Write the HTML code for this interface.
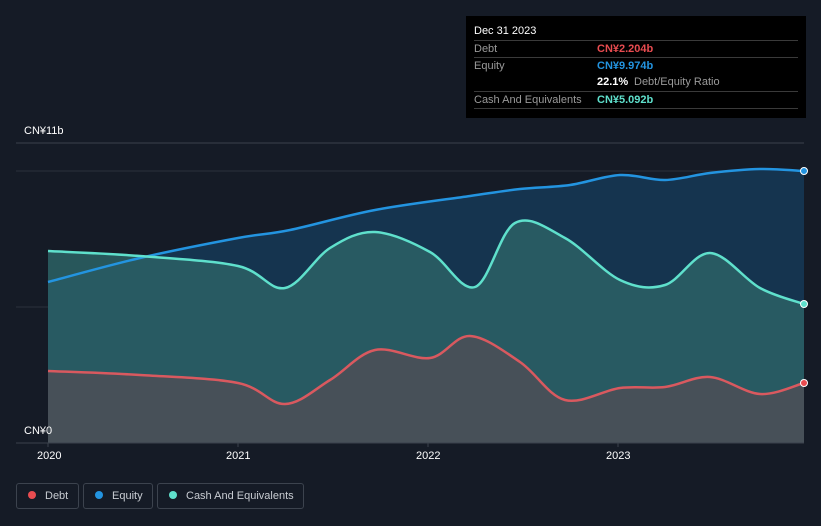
<!DOCTYPE html>
<html><head><meta charset="utf-8"><style>
body{margin:0;background:#151b26;width:821px;height:526px;overflow:hidden;font-family:"Liberation Sans",sans-serif;position:relative}
.tt{position:absolute;left:466px;top:16px;width:340px;height:102px;background:#000;color:#fff;font-size:11px}
.row{position:absolute;left:8px;width:324px;border-top:1px solid #3a3a3a;height:16px}
.row span{position:absolute;top:2px;white-space:nowrap}
.l{left:0;color:#9a9a9a}.v{left:123px;font-weight:bold}
.lab{position:absolute;color:#fff;font-size:11px}
.leg{position:absolute;top:483px;height:26px;border:1px solid #3c434e;border-radius:3px;color:#c8ccd2;font-size:11px;line-height:24px;box-sizing:border-box;white-space:nowrap}
.leg i{display:inline-block;width:8px;height:8px;border-radius:50%;margin:0 9px 0 11px;vertical-align:0}
</style></head><body>
<svg width="821" height="526" style="position:absolute;left:0;top:0">
<line x1="16" y1="143" x2="804" y2="143" stroke="#3a414c"/>
<line x1="16" y1="171" x2="804" y2="171" stroke="#2a313c"/>
<line x1="16" y1="307" x2="804" y2="307" stroke="#2a313c"/>
<path id="eA" fill="#15344f"/>
<path id="cA" fill="#2c6165" fill-opacity="0.85"/>
<path id="dA" fill="#4a4f58" fill-opacity="0.9"/>
<path id="eL" fill="none" stroke="#2394e0" stroke-width="2.5"/>
<path id="cL" fill="none" stroke="#5fe0cc" stroke-width="2.5"/>
<path id="dL" fill="none" stroke="#d9595f" stroke-width="2.5"/>
<line x1="16" y1="443" x2="804" y2="443" stroke="#3a414c"/>
<line x1="48" y1="443" x2="48" y2="447" stroke="#3a414c"/><line x1="238" y1="443" x2="238" y2="447" stroke="#3a414c"/><line x1="428" y1="443" x2="428" y2="447" stroke="#3a414c"/><line x1="618" y1="443" x2="618" y2="447" stroke="#3a414c"/>
<circle cx="804" cy="171" r="3.5" fill="#2394e0" stroke="#fff" stroke-width="1"/>
<circle cx="804" cy="304" r="3.5" fill="#5fe0cc" stroke="#fff" stroke-width="1"/>
<circle cx="804" cy="383" r="3.5" fill="#e84c50" stroke="#fff" stroke-width="1"/>
</svg>
<script>
function sm(p){var d="M"+p[0][0]+","+p[0][1];for(var i=0;i<p.length-1;i++){var a=p[i-1]||p[i],b=p[i],c=p[i+1],e=p[i+2]||c;var t=6;d+=" C"+(b[0]+(c[0]-a[0])/t)+","+(b[1]+(c[1]-a[1])/t)+" "+(c[0]-(e[0]-b[0])/t)+","+(c[1]-(e[1]-b[1])/t)+" "+c[0]+","+c[1];}return d;}
var E=[[48,282],[140,258],[238,238],[290,230],[375,210],[470,196],[520,189],[570,185],[620,175],[665,180],[710,173],[760,169],[804,171]];
var C=[[48,251],[140,256],[238,266],[285,288],[330,248],[375,232],[430,252],[475,287],[515,223],[565,238],[620,280],[665,285],[710,253],[760,288],[804,304]];
var D=[[48,371],[140,375],[238,383],[285,404],[330,380],[375,350],[430,358],[470,336],[520,362],[565,400],[620,388],[665,387],[710,377],[760,394],[804,383]];
[[E,"e"],[C,"c"],[D,"d"]].forEach(function(q){var s=sm(q[0]);document.getElementById(q[1]+"L").setAttribute("d",s);document.getElementById(q[1]+"A").setAttribute("d",s+" L804,443 L48,443 Z");});
</script>
<div class="lab" style="left:24px;top:125px">CN¥11b</div>
<div class="lab" style="left:24px;top:425px">CN¥0</div>
<div class="lab" style="left:37px;top:450px">2020</div>
<div class="lab" style="left:226px;top:450px">2021</div>
<div class="lab" style="left:416px;top:450px">2022</div>
<div class="lab" style="left:606px;top:450px">2023</div>
<div class="tt">
<div style="position:absolute;left:8px;top:9px">Dec 31 2023</div>
<div class="row" style="top:24px"><span class="l">Debt</span><span class="v" style="color:#e84c50">CN¥2.204b</span></div>
<div class="row" style="top:41px"><span class="l">Equity</span><span class="v" style="color:#2394e0">CN¥9.974b</span></div>
<div class="row" style="top:58px;border:none"><span class="v" style="color:#fff">22.1%</span><span style="left:160px;color:#9a9a9a">Debt/Equity Ratio</span></div>
<div class="row" style="top:75px"><span class="l">Cash And Equivalents</span><span class="v" style="color:#5fe0cc">CN¥5.092b</span></div>
<div class="row" style="top:92px;height:0"></div>
</div>
<div class="leg" style="left:16px;width:63px"><i style="background:#e84c50"></i>Debt</div>
<div class="leg" style="left:83px;width:70px"><i style="background:#2394e0"></i>Equity</div>
<div class="leg" style="left:157px;width:147px"><i style="background:#5fe0cc"></i>Cash And Equivalents</div>
</body></html>
